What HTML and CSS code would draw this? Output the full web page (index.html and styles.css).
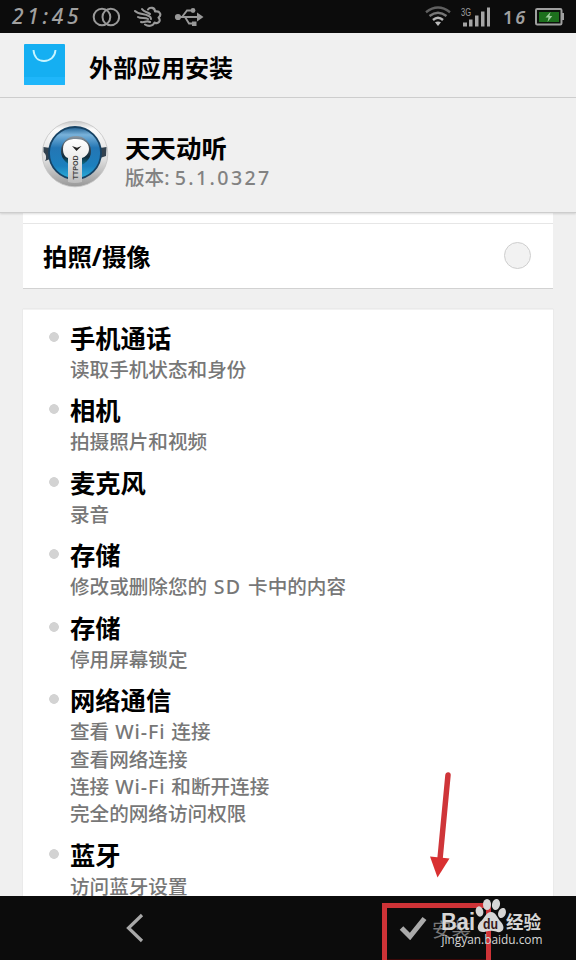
FILE: index.html
```html
<!DOCTYPE html>
<html lang="zh-CN">
<head>
<meta charset="utf-8">
<title>外部应用安装</title>
<link rel="stylesheet" href="styles.css">
</head>
<body>
<div class="screen">
  <header class="status">
    <span class="clock">21:45</span>
    <svg class="rings" width="28" height="20" viewBox="0 0 28 20"><g fill="none" stroke="#999" stroke-width="2"><circle cx="10" cy="10" r="8.300"/><circle cx="18.800" cy="10" r="8.300"/></g></svg>
    <svg class="wing" width="30" height="22" viewBox="0 0 30 22"><g fill="none" stroke="#999" stroke-width="2.100" stroke-linecap="round" stroke-linejoin="round"><path d="M2 5C6 9 11 7 16 10Q18 11 18 13M9 3C11 6 15 6 17 8M5 11C8 13 12 11 15 13M8 16C12 17 13 14 17 16"/><path d="M15 3.500C17 .5 22 1.500 22 5.500C27 4.500 29 9 25.500 11.500C28.500 15 25 18.500 21.500 16.500C20 20.500 15 20.500 12 18.500"/></g></svg>
    <svg class="usb" width="30" height="20" viewBox="0 0 30 20"><g fill="none" stroke="#999" stroke-width="1.900"><path d="M3 10H25M8 10L13 3.500H18M11 10L15 16.500H20"/></g><g fill="#999"><circle cx="4" cy="10" r="3.100"/><path d="M23 5.500L29.500 10L23 14.500Z"/><circle cx="19" cy="3.500" r="2.400"/><path d="M18 14.500h4.500v4.500H18z"/></g></svg>
    <span class="grow"></span>
    <svg class="wifi" width="26" height="21" viewBox="0 0 26 21"><g fill="none" stroke-width="2.400"><path d="M1 6.200Q13-3.200 25 6.200" stroke="#606060"/><path d="M4.500 10Q13 3.400 21.500 10" stroke="#777"/><path d="M8 14Q13 9.600 18 14" stroke="#b5b5b5"/></g><path d="M10 16.200Q13 14.600 16 16.200L13 20Z" fill="#bbb"/></svg>
    <svg class="signal" width="30" height="20" viewBox="0 0 30 20"><text x="0" y="9" class="gen" textLength="10" lengthAdjust="spacingAndGlyphs">3G</text><path fill="#a5a5a5" d="M2 15.500h4v4H2zM8 12.500h3.500v7H8zM14 8.500h3.500v11H14zM20 4.500h3.500v15H20zM26 .5h3v19h-3z"/></svg>
    <span class="level">1<em>6</em></span>
    <svg class="battery" width="30" height="18" viewBox="0 0 30 18"><rect x="1" y="1" width="25.500" height="15.500" rx="1.200" fill="#0c120c" stroke="#a0a0a0" stroke-width="2"/><path d="M27 5h2v7h-2z" fill="#a0a0a0"/><path d="M4 4h20v10H4z" fill="#1d701d"/><path d="M15.500 4L10.500 9.500H13.500L12.500 14L17.300 8H14.400Z" fill="#9fce9f"/></svg>
  </header>

  <div class="titlebar">
    <svg class="bag" width="41" height="41" viewBox="0 0 41 41"><rect width="41" height="41" rx="1" fill="#15aff2"/><path d="M0 33H41V40a1 1 0 0 1-1 1H1a1 1 0 0 1-1-1Z" fill="#1fb6fa"/><path d="M9.500 6C10 13 14 17 20 17S31 13 31.500 6" fill="none" stroke="#c9f5ff" stroke-width="1.900"/></svg>
    <h1>外部应用安装</h1>
  </div>

  <section class="app">
    <svg class="logo" width="68" height="68" viewBox="0 0 68 68">
      <defs>
        <linearGradient id="rim" x1="0" y1="0" x2="0" y2="1"><stop offset="0" stop-color="#c8c8c8"/><stop offset=".12" stop-color="#fbfbfb"/><stop offset=".6" stop-color="#dcdcdc"/><stop offset="1" stop-color="#989898"/></linearGradient>
        <linearGradient id="disc" x1="0" y1="0" x2="0" y2="1"><stop offset="0" stop-color="#1f5f90"/><stop offset=".15" stop-color="#79b2da"/><stop offset=".4" stop-color="#2476b4"/><stop offset=".75" stop-color="#1c7fbd"/><stop offset="1" stop-color="#2cb0da"/></linearGradient>
        <linearGradient id="hub" x1="0" y1="0" x2="0" y2="1"><stop offset="0" stop-color="#8b9aa6"/><stop offset=".35" stop-color="#434e58"/><stop offset=".7" stop-color="#102b3b"/><stop offset="1" stop-color="#0b7fa0"/></linearGradient>
        <linearGradient id="key" x1="0" y1="0" x2="0" y2="1"><stop offset="0" stop-color="#fff"/><stop offset=".4" stop-color="#eee"/><stop offset="1" stop-color="#bcbcbc"/></linearGradient>
      </defs>
      <circle cx="34" cy="34" r="32.800" fill="url(#rim)" stroke="#c3c3c3" stroke-width=".8"/>
      <path d="M2.500 27L9 28V39L4 41Q7 36 2.500 32ZM65.500 27L59 28V38L65 36Z" fill="#33424f"/>
      <circle cx="34" cy="33" r="26" fill="url(#disc)" stroke="#174365" stroke-width="1.800"/>
      <circle cx="35" cy="31" r="15" fill="url(#hub)"/>
      <path d="M22 29C22 21 28 19 35 19S48 22 48 29C48 34 44 37 41 38V62Q34 64 27 62V38C24 37 22 34 22 29Z" fill="url(#key)"/>
      <path d="M31 26L35.500 31L40.500 26L36 27.800Z" fill="#222"/>
      <text class="pod" transform="translate(37.300 59.500) rotate(-90)" textLength="24" lengthAdjust="spacingAndGlyphs">TTPOD</text>
    </svg>
    <div class="app-info">
      <h2>天天动听</h2>
      <p>版本: <span class="version">5.1.0327</span></p>
    </div>
  </section>

  <main class="content">
    <div class="camera-card">
      <span>拍照/摄像</span>
      <i class="radio"></i>
    </div>
    <ul class="permissions">
      <li><h3>手机通话</h3><p>读取手机状态和身份</p></li>
      <li><h3>相机</h3><p>拍摄照片和视频</p></li>
      <li><h3>麦克风</h3><p>录音</p></li>
      <li><h3>存储</h3><p>修改或删除您的<span class="sd"> SD </span>卡中的内容</p></li>
      <li><h3>存储</h3><p>停用屏幕锁定</p></li>
      <li><h3>网络通信</h3><p>查看<span class="wf"> Wi-Fi </span>连接</p><p>查看网络连接</p><p>连接<span class="wf"> Wi-Fi </span>和断开连接</p><p>完全的网络访问权限</p></li>
      <li><h3>蓝牙</h3><p>访问蓝牙设置</p></li>
    </ul>
  </main>

  <footer class="navbar">
    <svg class="back" width="20" height="32" viewBox="0 0 20 32"><path d="M17 3L3.500 16L17 29" fill="none" stroke="#a9a9a9" stroke-width="3.200"/></svg>
    <div class="install">
      <svg width="28" height="24" viewBox="0 0 28 24"><path d="M2.500 12L11 20.500L25.500 2.500" fill="none" stroke="#aaa" stroke-width="5"/></svg>
      <span>安装</span>
    </div>
  </footer>

  <svg class="annotation" width="206" height="200" viewBox="0 0 206 200">
    <path d="M78 15L70 99" stroke="#cf3539" stroke-width="5.500" stroke-linecap="round"/>
    <path d="M60 96.500L79.500 98.500L67.500 117.500Z" fill="#d93031"/>
    <path d="M14.500 204V145.500H118.500V204" fill="none" stroke="#ce3337" stroke-width="5"/>
    <path d="M17 199.500H116" stroke="#3b0808" stroke-width="1"/>
    <g fill="#d6d6d6">
      <ellipse cx="109.500" cy="151.500" rx="3.800" ry="5.200" transform="rotate(-15 109.500 151.500)"/>
      <ellipse cx="117" cy="144.500" rx="4" ry="5.500"/>
      <ellipse cx="126" cy="144.500" rx="4" ry="5.500" transform="rotate(12 126 144.500)"/>
      <ellipse cx="132" cy="153" rx="3.800" ry="5.200" transform="rotate(20 132 153)"/>
      <path d="M121 152C126 152 127 158 131 162C137 169 131 174 126 171.500Q121 170 116 171.500C109 174 105 168 110 162C115 158 116 152 121 152Z"/>
      <text class="mark" x="71" y="169.500" textLength="34" lengthAdjust="spacingAndGlyphs">Bai</text>
      <text class="mark-cn" x="136" y="168.500" textLength="35" lengthAdjust="spacingAndGlyphs">经验</text>
      <text class="mark-url" x="71.500" y="184" textLength="101" lengthAdjust="spacingAndGlyphs">jingyan.baidu.com</text>
    </g>
    <text class="mark-du" x="113" y="169" textLength="15" lengthAdjust="spacingAndGlyphs">du</text>
  </svg>
</div>
</body>
</html>
```
FILE: styles.css
```css
* { box-sizing: border-box; }
body { margin: 0; background: #f0f0f0; }
h1, h2, h3, p, ul { margin: 0; padding: 0; }

.screen {
  position: relative;
  display: flex;
  flex-direction: column;
  width: 576px;
  height: 960px;
  overflow: hidden;
  background: #f0f0f0;
  color: #000;
  font-family: "Noto Sans", "Noto Sans CJK SC", sans-serif;
}

.status {
  display: flex;
  align-items: center;
  flex: 0 0 33px;
  padding: 0 11px 0 12px;
  background: #0c0c0c;
  color: #a0a0a0;
}
.clock {
  width: 69px;
  margin-right: 11px;
  font: italic 500 21px/33px "Noto Sans", sans-serif;
  letter-spacing: 3.700px;
  white-space: nowrap;
}
.wing { margin-left: 13px; }
.usb { margin-left: 11px; }
.grow { flex: 1; }
.signal { margin-left: 10px; }
.gen { font: 10px "Liberation Sans", sans-serif; fill: #a0a0a0; }
.level {
  width: 27px;
  margin: 2px 5px 0 12px;
  font: 600 18px/31px "Noto Sans", sans-serif;
  letter-spacing: 2px;
  white-space: nowrap;
}

.titlebar {
  display: flex;
  align-items: center;
  flex: 0 0 65px;
  padding: 0 0 2px 24px;
  border-bottom: 1px solid #cfcfcf;
}
.titlebar h1 {
  margin: 8px 0 0 24px;
  font-size: 24px;
  line-height: 34px;
  font-weight: 700;
}

.app {
  position: relative;
  z-index: 1;
  display: flex;
  flex: 0 0 115px;
  padding: 22px 0 0 41px;
  background: #f0f0f0;
  border-bottom: 1px solid #cdcdcd;
  box-shadow: 0 1px 2px #0002;
}
.pod { font: bold 8px "Liberation Sans", sans-serif; fill: #444; }
.app-info { margin: 11px 0 0 16px; }
.app h2 {
  font-size: 25.500px;
  line-height: 34px;
  font-weight: 700;
}
.app p {
  color: #828282;
  font-size: 19.600px;
  line-height: 26px;
  font-weight: 500;
}
.version { letter-spacing: 2.400px; }

.content {
  flex: 1;
  min-height: 0;
  padding: 0 23px;
  overflow: hidden;
}
.camera-card {
  display: flex;
  align-items: center;
  justify-content: space-between;
  height: 76px;
  padding: 0 22px 1px 20px;
  border-top: 10px solid #fff;
  border-bottom: 1px solid #d2d2d2;
  background: linear-gradient(#e6e6e6 1px, #fff 1px);
  font-size: 24.400px;
  font-weight: 700;
}
.radio {
  width: 27px;
  height: 27px;
  border: 1.500px solid #cecece;
  border-radius: 50%;
  background: #f2f2f2;
}
.permissions {
  height: 620px;
  margin-top: 20px;
  padding-top: 12px;
  background: #fff;
  border-top: 1px solid #f2f2f2;
  box-shadow: 0 0 1px #ccc;
  list-style: none;
}
.permissions li {
  margin: 0 0 11.200px;
  padding-left: 47px;
  background: radial-gradient(circle at 31px 15px, #d3d3d3 4.500px, transparent 5.200px);
}
.permissions h3 {
  height: 34px;
  font-size: 25.300px;
  line-height: 33px;
  font-weight: 700;
}
.permissions p {
  height: 27.300px;
  color: #777;
  font-size: 19.600px;
  line-height: 27.300px;
  font-weight: 500;
  white-space: nowrap;
}
.sd { letter-spacing: 1.400px; }
.wf { letter-spacing: .9px; }

.navbar {
  display: flex;
  align-items: center;
  flex: 0 0 64px;
  padding-left: 125px;
  background: #0c0c0c;
}
.install {
  display: flex;
  align-items: center;
  margin-left: 254px;
  color: #777;
  font-size: 19.500px;
}
.install span { margin-left: 5px; }
.annotation {
  position: absolute;
  left: 370px;
  top: 760px;
}
.mark { font: bold 23px "Liberation Sans", sans-serif; }
.mark-du { font: bold 14px "Liberation Sans", sans-serif; fill: #35191a; }
.mark-cn { font: 700 18px "Noto Sans CJK SC", sans-serif; }
.mark-url { font: 500 12.500px "Open Sans", sans-serif; }
```
